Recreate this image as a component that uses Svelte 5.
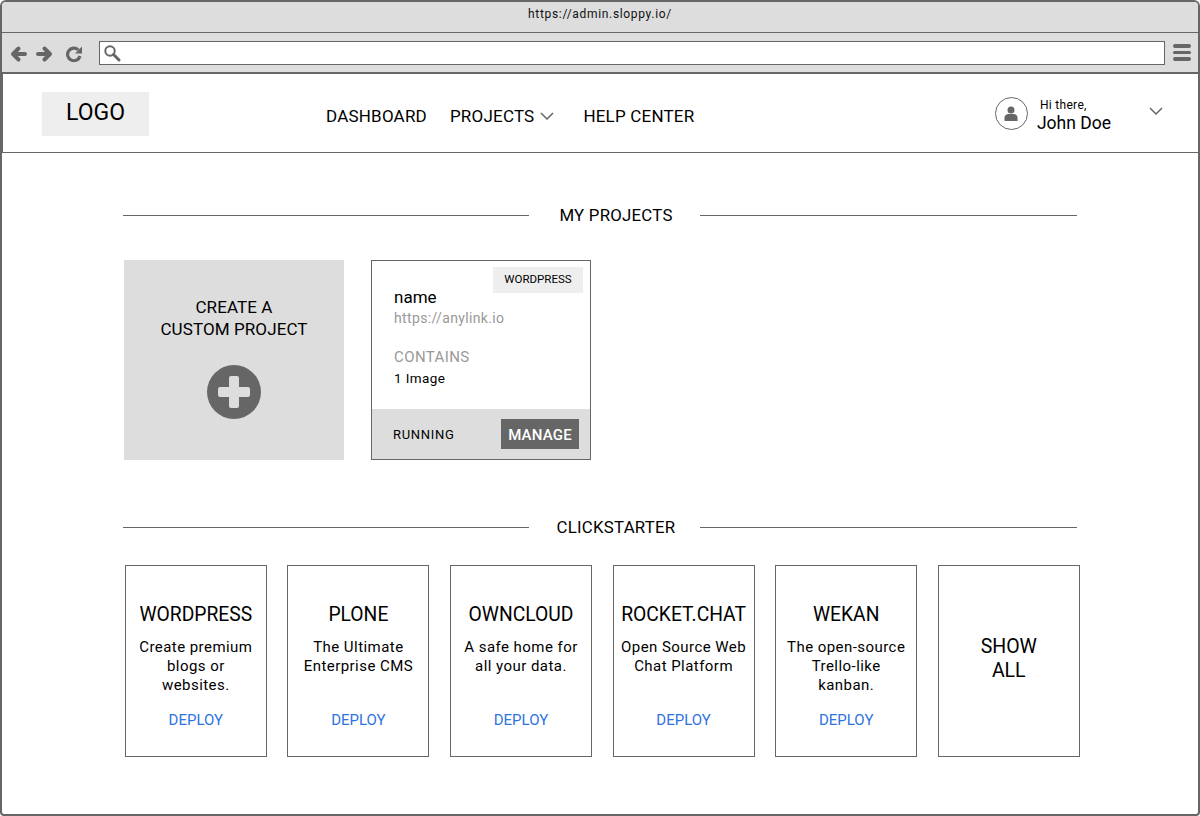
<script lang="ts">
  const starters = [
    { name: 'WORDPRESS', text: ['Create premium', 'blogs or', 'websites.'] },
    { name: 'PLONE', text: ['The Ultimate', 'Enterprise CMS'] },
    { name: 'OWNCLOUD', text: ['A safe home for', 'all your data.'] },
    { name: 'ROCKET.CHAT', text: ['Open Source Web', 'Chat Platform'] },
    { name: 'WEKAN', text: ['The open-source', 'Trello-like', 'kanban.'] }
  ];
</script>

<div class="window">
  <div class="titlebar">https://admin.sloppy.io/</div>
  <div class="toolbar">
    <svg class="nav" width="74" height="18" viewBox="0 0 74 18" fill="none" stroke="#666" stroke-width="4" stroke-linecap="round" stroke-linejoin="round">
      <path d="M15 9H4M8.500 3.500 3 9l5.500 5.500" />
      <path d="M28 9h11M34.500 3.500 40 9l-5.500 5.500" />
      <path d="M68.200 4.800A6.300 6.300 0 1 0 70 11" stroke-width="3.200" stroke-linecap="butt" />
      <path d="M72 1.500V8.500h-7z" fill="#666" stroke="none" />
    </svg>
    <div class="urlbar">
      <svg width="18" height="18" viewBox="0 0 18 18" fill="none" stroke="#666">
        <circle cx="7" cy="7" r="4.700" stroke-width="2" />
        <path d="M10.500 10.500 16 16" stroke-width="3" stroke-linecap="round" />
      </svg>
    </div>
    <div class="burger"><span></span><span></span><span></span></div>
  </div>

  <header class="header">
    <div class="logo">LOGO</div>
    <nav class="menu">
      <span>DASHBOARD</span>
      <span class="projects">PROJECTS
        <svg width="14" height="8" viewBox="0 0 14 8" fill="none" stroke="#666" stroke-width="1.500"><path d="M1 1l6 6 6-6" /></svg>
      </span>
      <span>HELP CENTER</span>
    </nav>
    <div class="user">
      <div class="avatar">
        <svg width="14" height="15" viewBox="0 0 14 15" fill="#666">
          <circle cx="7" cy="4" r="3.500" />
          <path d="M0.500 15v-3.500C0.500 9.500 2.500 8 4.500 8h5c2 0 4 1.500 4 3.500V15z" />
        </svg>
      </div>
      <div class="who">
        <span class="hi">Hi there,</span>
        <span class="name">John Doe</span>
      </div>
      <svg class="caret" width="14" height="8" viewBox="0 0 14 8" fill="none" stroke="#666" stroke-width="1.500"><path d="M1 1l6 6 6-6" /></svg>
    </div>
  </header>

  <main class="content">
    <div class="heading"><i class="left"></i><h2>MY PROJECTS</h2><i></i></div>
    <div class="projects-row">
      <div class="create">
        <div>CREATE A<br />CUSTOM PROJECT</div>
        <div class="plus">
          <svg width="34" height="34" viewBox="0 0 34 34" fill="#ddd">
            <path d="M12 3a2 2 0 0 1 2-2h6a2 2 0 0 1 2 2v9h9a2 2 0 0 1 2 2v6a2 2 0 0 1-2 2h-9v9a2 2 0 0 1-2 2h-6a2 2 0 0 1-2-2v-9H3a2 2 0 0 1-2-2v-6a2 2 0 0 1 2-2h9z" />
          </svg>
        </div>
      </div>
      <div class="project">
        <span class="tag">WORDPRESS</span>
        <div class="body">
          <div class="pname">name</div>
          <div class="link">https://anylink.io</div>
          <div class="contains">CONTAINS</div>
          <div class="images">1 Image</div>
        </div>
        <div class="foot">
          <span>RUNNING</span>
          <span class="manage">MANAGE</span>
        </div>
      </div>
    </div>

    <div class="heading second"><i class="left"></i><h2>CLICKSTARTER</h2><i></i></div>
    <div class="starters">
      {#each starters as s}
        <div class="starter">
          <h3>{s.name}</h3>
          <p>
            {#each s.text as line}{line}<br />{/each}
          </p>
          <span class="deploy">DEPLOY</span>
        </div>
      {/each}
      <div class="starter all">SHOW<br />ALL</div>
    </div>
  </main>
</div>

<style>
  :global(body) {
    margin: 0;
    background: #fff;
  }
  .window {
    box-sizing: border-box;
    width: 1200px;
    height: 816px;
    border: 2px solid #666;
    border-radius: 6px 6px 4px 4px;
    overflow: hidden;
    display: flex;
    flex-direction: column;
    font-family: Roboto, sans-serif;
    color: #000;
  }
  .titlebar {
    height: 30px;
    background: #ddd;
    border-bottom: 1px solid #666;
    text-align: center;
    font-size: 12px;
    line-height: 24px;
    letter-spacing: 0.67px;
    color: #111;
  }
  .toolbar {
    height: 39px;
    background: #ddd;
    border-bottom: 2px solid #666;
    display: flex;
    align-items: center;
    padding: 0 0 0 8px;
  }
  .nav {
    flex: none;
    margin-top: 2px;
  }
  .urlbar {
    box-sizing: border-box;
    margin-left: 15px;
    width: 1066px;
    height: 24px;
    background: #fff;
    border: 1px solid #666;
    display: flex;
    align-items: center;
    padding-left: 3px;
  }
  .burger {
    margin-left: 8px;
    display: flex;
    flex-direction: column;
    gap: 3px;
  }
  .burger span {
    display: block;
    width: 18px;
    height: 3.500px;
    border-radius: 2px;
    background: #666;
  }
  .header {
    height: 78px;
    border-bottom: 1px solid #666;
    box-shadow: inset 1px 0 #666;
    display: flex;
    align-items: center;
    padding-left: 40px;
  }
  .logo {
    box-sizing: border-box;
    width: 107px;
    height: 44px;
    margin-top: 2px;
    padding-bottom: 3px;
    background: #eee;
    display: flex;
    align-items: center;
    justify-content: center;
    font-size: 23px;
  }
  .menu {
    margin-left: 177px;
    margin-top: 6px;
    display: flex;
    font-size: 17px;
    letter-spacing: 0.2px;
    gap: 23px;
  }
  .projects {
    display: flex;
    align-items: center;
    gap: 6px;
    margin-right: 6px;
  }
  .user {
    margin-left: auto;
    display: flex;
    align-items: center;
    margin-right: 35px;
  }
  .avatar {
    box-sizing: border-box;
    width: 33px;
    height: 33px;
    border: 1px solid #666;
    border-radius: 50%;
    display: flex;
    align-items: center;
    justify-content: center;
  }
  .who {
    display: flex;
    flex-direction: column;
    margin-left: 9px;
    padding-top: 6px;
  }
  .hi {
    font-size: 12px;
    line-height: 15px;
    margin-left: 3px;
    letter-spacing: 0.3px;
  }
  .name {
    font-size: 17.500px;
    line-height: 21px;
  }
  .caret {
    margin-left: 38px;
    margin-bottom: 4px;
  }
  .content {
    flex: 1;
    padding: 0 0 0 121px;
  }
  .heading {
    width: 954px;
    height: 20px;
    margin-top: 52px;
    display: flex;
    align-items: center;
  }
  .heading.second {
    margin-top: 57px;
  }
  .heading i {
    flex: 1;
    height: 1px;
    background: #666;
  }
  .heading i.left {
    flex: none;
    width: 406px;
  }
  .heading h2 {
    box-sizing: border-box;
    width: 171px;
    margin: 0;
    padding-left: 3px;
    text-align: center;
    font-size: 16.800px;
    font-weight: 400;
    letter-spacing: 0.25px;
  }
  .projects-row {
    display: flex;
    gap: 27px;
    margin-top: 35px;
    padding-left: 1px;
  }
  .create {
    width: 220px;
    height: 200px;
    background: #ddd;
    text-align: center;
    font-size: 17px;
    letter-spacing: 0.1px;
    line-height: 22px;
    padding-top: 36px;
    box-sizing: border-box;
  }
  .plus {
    width: 54px;
    height: 54px;
    margin: 25px auto 0;
    border-radius: 50%;
    background: #666;
    display: flex;
    align-items: center;
    justify-content: center;
  }
  .project {
    box-sizing: border-box;
    width: 220px;
    height: 200px;
    border: 1px solid #666;
    position: relative;
    display: flex;
    flex-direction: column;
  }
  .tag {
    position: absolute;
    top: 6px;
    right: 7px;
    width: 90px;
    height: 26px;
    background: #eee;
    font-size: 11.500px;
    line-height: 24px;
    text-align: center;
  }
  .body {
    flex: 1;
    padding: 25px 0 0 22px;
  }
  .pname {
    font-size: 17px;
    line-height: 22px;
  }
  .link {
    font-size: 14px;
    line-height: 20px;
    color: #999;
    letter-spacing: 0.35px;
  }
  .contains {
    margin-top: 19px;
    font-size: 15px;
    line-height: 20px;
    letter-spacing: 0.4px;
    color: #999;
  }
  .images {
    margin-top: 2px;
    font-size: 13.500px;
    line-height: 18px;
    letter-spacing: 0.4px;
  }
  .foot {
    height: 50px;
    background: #ddd;
    display: flex;
    align-items: center;
    justify-content: space-between;
    padding: 0 11px 0 21px;
    font-size: 13px;
    letter-spacing: 0.7px;
  }
  .manage {
    width: 78px;
    height: 30px;
    background: #666;
    color: #fff;
    font-size: 15px;
    font-weight: 500;
    line-height: 32px;
    letter-spacing: 0.2px;
    text-align: center;
  }
  .starters {
    display: grid;
    grid-template-columns: repeat(6, 142px);
    column-gap: 20.600px;
    margin-top: 28px;
    padding-left: 1.800px;
  }
  .starter {
    box-sizing: border-box;
    height: 192px;
    border: 1px solid #666;
    text-align: center;
    display: flex;
    flex-direction: column;
    align-items: center;
    position: relative;
    padding-top: 37px;
  }
  .starter h3 {
    margin: 0;
    font-size: 19.300px;
    line-height: 24px;
    font-weight: 400;
    white-space: nowrap;
  }
  .starter p {
    margin: 11px 0 0;
    font-size: 15px;
    line-height: 19px;
    letter-spacing: 0.45px;
    white-space: nowrap;
  }
  .deploy {
    position: absolute;
    left: 0;
    right: 0;
    top: 144px;
    font-size: 15px;
    line-height: 20px;
    color: #2f73e0;
  }
  .starter.all {
    justify-content: center;
    padding-top: 0;
    padding-bottom: 4px;
    font-size: 19.500px;
    line-height: 24px;
  }
</style>
